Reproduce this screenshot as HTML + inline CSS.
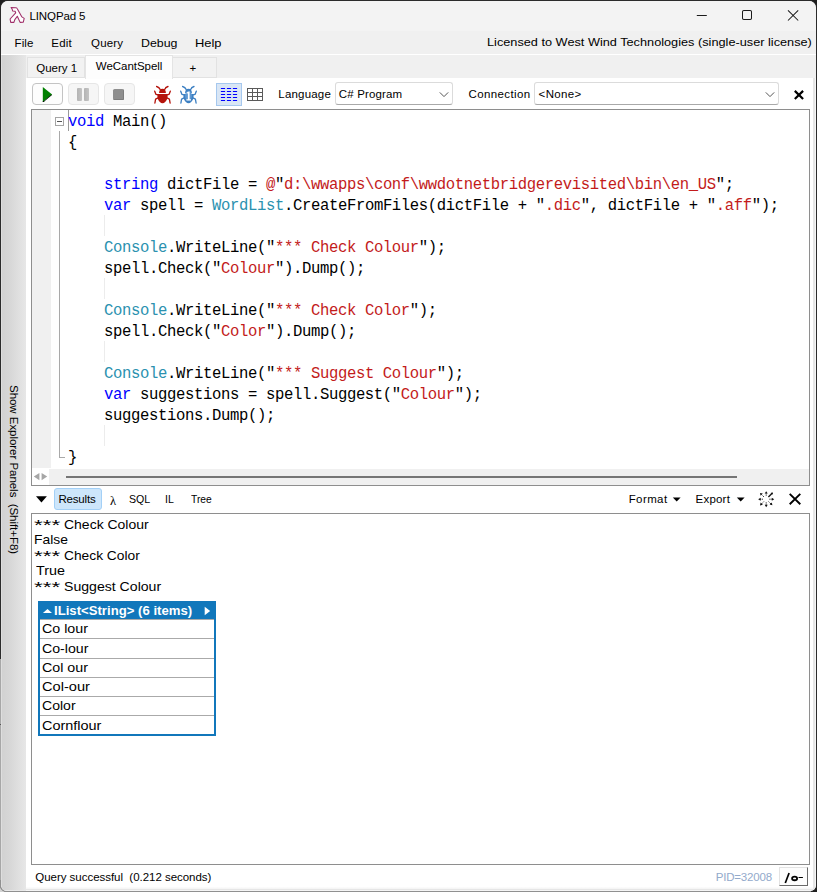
<!DOCTYPE html>
<html>
<head>
<meta charset="utf-8">
<title>LINQPad 5</title>
<style>
html,body{margin:0;padding:0;}
body{width:817px;height:892px;overflow:hidden;background:#1f1f1f;font-family:"Liberation Sans",sans-serif;font-size:12px;color:#000;position:relative;}
.a{position:absolute;}
#win{position:absolute;left:0;top:0;width:817px;height:892px;border-radius:8px 8px 7px 7px;background:#2b2b2b;overflow:hidden;}
#inner{position:absolute;left:1px;top:1px;width:815px;height:890px;border-radius:7px 7px 6px 6px;background:#fff;overflow:hidden;}
#c{position:absolute;left:-1px;top:-1px;width:817px;height:892px;}
.t{position:absolute;white-space:pre;line-height:16px;height:16px;color:#000;}
#title{left:0;top:0;width:817px;height:31px;background:#f3f3f3;}
#menu{left:0;top:31px;width:817px;height:23px;background:#f0f0f0;}
#side{left:1px;top:55px;width:25px;height:836px;background:linear-gradient(to right,#e4e4e4 0px,#d2d2d2 1.5px,#d6d6d6 8px,#e0e0e0 18px,#e7e7e7 25px);}
#tabs{left:26px;top:55px;width:791px;height:23px;background:#f0f0f0;}
.tab{position:absolute;box-sizing:border-box;border:1px solid #e2e2e2;background:#f2f2f2;}
.btn{position:absolute;box-sizing:border-box;border:1px solid #e6e6e6;border-radius:4px;background:#f6f6f6;}
.combo{position:absolute;box-sizing:border-box;border:1px solid #dbdbdb;border-bottom-color:#a9a9a9;border-radius:3px;background:#fff;}
#editor{left:31px;top:109px;width:779px;height:377px;box-sizing:border-box;border:1px solid #8e8e8e;background:#fff;}
#gutter{left:32px;top:110px;width:19px;height:357.5px;background:#f0f0f0;}
#code{left:68px;top:112px;font-family:"Liberation Mono",monospace;font-size:15.6px;letter-spacing:-0.362px;line-height:21px;white-space:pre;color:#000;}
#code .k{color:#0000ff;}
#code .s{color:#c31b1b;}
#code .c{color:#2b91af;}
#hscroll{left:32px;top:469px;width:777px;height:16px;background:#f0f0f0;}
#results{left:31px;top:513px;width:779px;height:352px;box-sizing:border-box;border:1px solid #8e8e8e;background:#fff;}
</style>
</head>
<body>
<div class="a" style="left:0;top:659px;width:24px;height:233px;background:#d3d3d3;"></div>
<div id="win"><div class="a" style="left:0;top:659px;width:30px;height:233px;background:#a7a7a7;"></div><div class="a" style="left:0;top:724px;width:1px;height:1px;background:#555;"></div><div class="a" style="left:0;top:880px;width:811px;height:12px;background:#909090;"></div><div id="inner"><div id="c">
  <div id="title" class="a"></div>
  <svg class="a" style="left:8px;top:5px" width="20" height="20" viewBox="0 0 20 20"><path d="M3.1 2.5 L8 2.7 Q9 2.9 9.4 3.9 L13.9 11.9 L16.2 13.4 L15.3 17.2 L12.1 17.4 L9.3 11.2 L6.8 14.6 L5.9 17.4 L2.7 17.4 L2.1 14 L7.7 7.8 L7.1 6.3 L4.75 6.05 L4.2 4.3 Z" fill="#fff" stroke="#a0306a" stroke-width="1.08" stroke-linejoin="round"/></svg>
  <svg class="a" style="left:690px;top:4px" width="120" height="24" viewBox="0 0 120 24"><g stroke="#1b1b1b" stroke-width="1.05" fill="none"><path d="M6.8 11.5 H16.8"/><rect x="52.5" y="6.5" width="9" height="9" rx="1.3"/><path d="M98 6.3 L108.2 16.5 M108.2 6.3 L98 16.5"/></g></svg>
  <div id="menu" class="a"></div>
  <div class="a" style="left:0;top:54px;width:817px;height:1px;background:#ffffff"></div>

  <div id="side" class="a"></div>
  <div class="t" id="sidetxt" style="left:19.8px;top:385px;transform-origin:0 0;transform:rotate(90deg);font-size:11.5px;line-height:12px;height:12px;letter-spacing:-0.04px;">Show Explorer Panels  (Shift+F8)</div>

  <div id="tabs" class="a"></div>
  <div class="tab" style="left:27px;top:57px;width:58px;height:21px;"></div>
  <div class="tab" style="left:172px;top:57px;width:45px;height:21px;"></div>
  <div class="tab" style="left:85px;top:55px;width:88px;height:24px;background:#fdfdfd;border-bottom:none;border-color:#e4e4e4;"></div>

  <!-- toolbar buttons -->
  <div class="btn" style="left:32px;top:83px;width:31px;height:22px;background:#fdfdfd;border-color:#c4c4c4;"></div>
  <svg class="a" style="left:38px;top:84px" width="20" height="20" viewBox="0 0 20 20"><path d="M4.8 2.9 L14.1 10.4 L4.8 18 Z" fill="#008000"/><path d="M5 17.7 L5.6 18.1 L14 10.9 L13.4 10.5 Z" fill="#001800"/><path d="M4.8 17.1 H6.2 V18 H4.8 Z" fill="#001800"/></svg>
  <div class="btn" style="left:68px;top:83px;width:31px;height:22px;"></div>
  <div class="a" style="left:76.8px;top:88.3px;width:5px;height:12.4px;background:linear-gradient(to right,#b4b4b4,#c4c4c4);border-radius:1px"></div>
  <div class="a" style="left:83.8px;top:88.3px;width:5px;height:12.4px;background:linear-gradient(to right,#b4b4b4,#c4c4c4);border-radius:1px"></div>
  <div class="btn" style="left:104px;top:83px;width:31px;height:22px;"></div>
  <div class="a" style="left:113.2px;top:88.8px;width:10.7px;height:10.8px;background:#8e8e8e;border-right:1px solid #7c7c7c;border-bottom:1px solid #7c7c7c;box-sizing:border-box;border-radius:1.5px"></div>

  <!-- bugs -->
  <svg class="a" style="left:152px;top:83px" width="22" height="22" viewBox="0 0 22 22">
    <g stroke="#b5140c" stroke-width="1.35" fill="none" stroke-linecap="round" stroke-linejoin="round">
      <path d="M4.6 3.5 Q7.2 4.2 8.2 6.6"/><path d="M16 3.5 Q13.4 4.2 12.6 6.6"/>
      <path d="M6.4 11.9 L3.9 11.3 L2.7 8.2"/><path d="M14.6 11.9 L17.1 11.3 L18.3 8.2"/>
      <path d="M6.6 14.6 L3.6 16.2 L2.9 20"/><path d="M14.4 14.6 L17.4 16.2 L18.1 20"/>
    </g>
    <path d="M5.5 10.9 H15.5 Q16.2 15.6 13.6 18.4 Q11.8 20.2 10.5 20.3 Q9.2 20.2 7.4 18.4 Q4.8 15.6 5.5 10.9 Z" fill="#b5140c"/>
    <path d="M7.1 10.1 A3.4 4.4 0 0 1 13.9 10.1 Z" fill="#b5140c"/>
    
  </svg>
  <svg class="a" style="left:177.8px;top:83px" width="22" height="22" viewBox="0 0 22 22">
    <g stroke="#3d80c3" stroke-width="1.35" fill="none" stroke-linecap="round" stroke-linejoin="round">
      <path d="M4.6 3.5 Q7.2 4.2 8.2 6.6"/><path d="M16 3.5 Q13.4 4.2 12.6 6.6"/>
      <path d="M6.4 11.9 L3.9 11.3 L2.7 8.2"/><path d="M14.6 11.9 L17.1 11.3 L18.3 8.2"/>
      <path d="M6.6 14.6 L3.6 16.2 L2.9 20"/><path d="M14.4 14.6 L17.4 16.2 L18.1 20"/>
    </g>
    <path d="M5.5 10.9 H15.5 Q16.2 15.6 13.6 18.4 Q11.8 20.2 10.5 20.3 Q9.2 20.2 7.4 18.4 Q4.8 15.6 5.5 10.9 Z" fill="#3d80c3"/>
    <path d="M7.1 10.1 A3.4 4.4 0 0 1 13.9 10.1 Z" fill="#3d80c3"/>
    <ellipse cx="10.5" cy="12.8" rx="3.4" ry="5" fill="#5f99d3"/><path d="M8.7 9.6 L10.9 8.4 H11.6 V16.3 H13 V17.5 H8.4 V16.3 H9.9 V10.2 L8.7 10.8 Z" fill="#fff"/>
  </svg>
  <!-- text / grid mode -->
  <div class="a" style="left:216px;top:83px;width:26px;height:23px;box-sizing:border-box;border:1px solid #a6c8ee;background:#d9e6f5;"></div>
  <svg class="a" style="left:216px;top:83px" width="50" height="24" viewBox="0 0 50 24">
    <g stroke="#0000ff" stroke-width="1" stroke-dasharray="4.2 1.8" fill="none">
      <path d="M4.9 5.5 H21.2"/><path d="M4.9 8.5 H21.2"/><path d="M4.9 11.5 H21.2"/><path d="M4.9 14.5 H21.2"/><path d="M4.9 17.5 H21.2"/>
    </g>
    <g stroke="#5a5a5a" stroke-width="1" fill="none">
      <rect x="31.5" y="5.5" width="15" height="12" fill="#fff"/>
      <path d="M36.5 5.5 V17.5 M41.5 5.5 V17.5 M31.5 9.5 H46.5 M31.5 13.5 H46.5"/>
    </g>
  </svg>

  <div class="combo" style="left:335px;top:82px;width:118px;height:23px;"></div>
  <svg class="a" style="left:438px;top:90px" width="12" height="9" viewBox="0 0 12 9"><path d="M1.8 2.4 L6 6.6 L10.2 2.4" stroke="#555" stroke-width="1" fill="none"/></svg>
  <div class="combo" style="left:534px;top:82px;width:245px;height:23px;"></div>
  <svg class="a" style="left:764px;top:90px" width="12" height="9" viewBox="0 0 12 9"><path d="M1.8 2.4 L6 6.6 L10.2 2.4" stroke="#555" stroke-width="1" fill="none"/></svg>
  <svg class="a" style="left:791px;top:87px" width="16" height="16" viewBox="0 0 16 16"><path d="M3.8 3.9 L12.1 12 M12.1 3.9 L3.8 12" stroke="#000" stroke-width="2.2" fill="none"/></svg>

  <!-- editor -->
  <div id="editor" class="a"></div>
  <div id="gutter" class="a"></div>
  <div class="a" style="left:55px;top:117px;width:9px;height:9px;box-sizing:border-box;border:1px solid #a5a5a5;background:#fff;"></div>
  <div class="a" style="left:57px;top:121px;width:5px;height:1px;background:#555;"></div>
  <div class="a" style="left:59px;top:131px;width:1px;height:327px;background:#a9a9a9;"></div>
  <div class="a" style="left:59px;top:457px;width:6px;height:1px;background:#a9a9a9;"></div>
  <div class="a" style="left:68px;top:110px;width:1px;height:21px;background:#9a9a9a;"></div>
  <div class="a" style="left:104px;top:215px;width:1px;height:21px;background:#ececec;"></div>
  <div class="a" style="left:104px;top:278px;width:1px;height:21px;background:#ececec;"></div>
  <div class="a" style="left:104px;top:341px;width:1px;height:21px;background:#ececec;"></div>
  <div class="a" style="left:104px;top:425px;width:1px;height:21px;background:#ececec;"></div>
  <div id="code" class="a"><span class="k">void</span> Main()
{

    <span class="k">string</span> dictFile = <span class="s">@</span>"<span class="s">d:\wwapps\conf\wwdotnetbridgerevisited\bin\en_US</span>";
    <span class="k">var</span> spell = <span class="c">WordList</span>.CreateFromFiles(dictFile + "<span class="s">.dic</span>", dictFile + "<span class="s">.aff</span>");

    <span class="c">Console</span>.WriteLine("<span class="s">*** Check Colour</span>");
    spell.Check("<span class="s">Colour</span>").Dump();

    <span class="c">Console</span>.WriteLine("<span class="s">*** Check Color</span>");
    spell.Check("<span class="s">Color</span>").Dump();

    <span class="c">Console</span>.WriteLine("<span class="s">*** Suggest Colour</span>");
    <span class="k">var</span> suggestions = spell.Suggest("<span class="s">Colour</span>");
    suggestions.Dump();

}</div>
  <div id="hscroll" class="a"></div>
  <div class="a" style="left:32px;top:469px;width:17px;height:16px;background:#fff;"></div>
  <svg class="a" style="left:32px;top:470px" width="18" height="14" viewBox="0 0 18 14"><path d="M7.4 3 V10.2 L1.8 6.6 Z M9.6 3 V10.2 L15.2 6.6 Z" fill="#a6a6a6"/></svg>
  <div class="a" style="left:66px;top:475.6px;width:671px;height:2.2px;background:#757575;"></div>

  <!-- results toolbar -->
  <svg class="a" style="left:35px;top:495px" width="13" height="9" viewBox="0 0 13 9"><path d="M1 1.3 H11.9 L6.45 7.6 Z" fill="#000"/></svg>
  <div class="a" style="left:54px;top:488px;width:48px;height:22px;box-sizing:border-box;border:1px solid #a3d0f7;border-radius:3px;background:#cde6fb;"></div>
  <svg class="a" style="left:672px;top:496px" width="10" height="7" viewBox="0 0 10 7"><path d="M0.8 1.4 H8.6 L4.7 5.6 Z" fill="#000"/></svg>
  <svg class="a" style="left:735.5px;top:496px" width="10" height="7" viewBox="0 0 10 7"><path d="M0.8 1.4 H8.6 L4.7 5.6 Z" fill="#000"/></svg>
  <svg class="a" style="left:757px;top:490px" width="19" height="19" viewBox="0 0 19 19">
    <g stroke="#111" stroke-width="1" fill="none" stroke-dasharray="1.1 0.9">
      <path d="M9.2 3.4 V6"/><path d="M9.2 12.4 V15"/><path d="M3.2 9.2 H6"/><path d="M12.4 9.2 H15"/>
      <path d="M4.6 4.6 L6.8 6.8"/><path d="M4.6 13.8 L6.8 11.6"/><path d="M13.8 13.8 L11.6 11.6"/>
    </g>
    <path d="M11.4 7 L15.4 3" stroke="#111" stroke-width="1.3" fill="none"/>
    <g fill="#111"><path d="M9.2 1.2 L10.7 3.6 H7.7 Z"/><path d="M9.2 17.2 L10.7 14.8 H7.7 Z"/><path d="M1.2 9.2 L3.6 7.7 V10.7 Z"/><path d="M17.2 9.2 L14.8 7.7 V10.7 Z"/>
    <path d="M3 3 L5.8 3.6 L3.6 5.8 Z"/><path d="M3 15.4 L5.8 14.8 L3.6 12.6 Z"/><path d="M15.4 15.2 L12.6 14.6 L14.8 12.4 Z"/><path d="M16 2.4 L13.6 3 L15.4 4.8 Z"/></g>
  </svg>
  <svg class="a" style="left:786px;top:491px" width="18" height="18" viewBox="0 0 18 18"><path d="M3.7 2.9 L14.3 13.2 M14.3 2.9 L3.7 13.2" stroke="#000" stroke-width="1.9" fill="none"/></svg>

  <!-- results pane -->
  <div id="results" class="a"></div>
  <div class="a" style="left:38px;top:601px;width:178px;height:135px;box-sizing:border-box;border:2px solid #1177bb;background:#fff;"></div>
  <div class="a" style="left:38px;top:601px;width:178px;height:18.4px;background:#1177bb;"></div>
  <div class="a" style="left:40px;top:638.4px;width:174px;height:1px;background:#aaa;"></div>
  <div class="a" style="left:40px;top:657.6px;width:174px;height:1px;background:#aaa;"></div>
  <div class="a" style="left:40px;top:676.8px;width:174px;height:1px;background:#aaa;"></div>
  <div class="a" style="left:40px;top:696px;width:174px;height:1px;background:#aaa;"></div>
  <div class="a" style="left:40px;top:715.2px;width:174px;height:1px;background:#aaa;"></div>
  <div class="a" style="left:40px;top:619.2px;width:174px;height:1px;background:#aaa;"></div>
  <svg class="a" style="left:42px;top:606px" width="12" height="10" viewBox="0 0 12 10"><path d="M0.9 7 L5.5 2.9 L10 7 Z" fill="#fff"/></svg>
  <svg class="a" style="left:203px;top:605px" width="10" height="12" viewBox="0 0 10 12"><path d="M1.7 1.8 L7.2 6 L1.7 10.3 Z" fill="#fff"/></svg>

  <!-- status -->
  <div class="a" style="left:779px;top:867px;width:29px;height:19px;box-sizing:border-box;border:1px solid #e3e3e3;border-right-color:#696969;border-bottom-color:#696969;background:#fdfdfd;"></div>
  <svg class="a" style="left:780px;top:868px" width="27" height="17" viewBox="0 0 27 17"><path d="M5.3 15 L9.1 5" stroke="#000" stroke-width="1.7" fill="none"/><ellipse cx="14.6" cy="10.45" rx="2.5" ry="1.8" stroke="#000" stroke-width="1.8" fill="none"/><path d="M18.5 9.5 H22.9" stroke="#000" stroke-width="1.1" fill="none"/></svg>
  <div class="a" style="left:26px;top:887px;width:791px;height:4px;background:linear-gradient(to bottom,#fdfdfd 0,#f6f6f6 1.5px,#e6e6e6 2.5px,#f5f5f5 3.5px,#f5f5f5 4px);"></div>
  <div class="a" style="left:1px;top:890px;width:25px;height:1px;background:#e9e9e9;"></div>
  <div class="a" style="left:813px;top:78px;width:3px;height:813px;background:linear-gradient(to right,#e6e6e6 0,#e6e6e6 1.6px,#f5f5f5 2.2px,#f5f5f5 3px);"></div>

<div class="t" style="top:8.02px;font-size:11.5px;left:29.50px;letter-spacing:-0.113px;">LINQPad 5</div>
<div class="t" style="top:35.02px;font-size:11.5px;left:14.60px;letter-spacing:0.100px;">File</div>
<div class="t" style="top:35.02px;font-size:11.5px;left:51.30px;letter-spacing:0.233px;">Edit</div>
<div class="t" style="top:35.02px;font-size:11.5px;left:91.00px;letter-spacing:0.200px;">Query</div>
<div class="t" style="top:35.02px;font-size:11.5px;left:141.43px;transform-origin:0 0;transform:scaleX(1.0750);">Debug</div>
<div class="t" style="top:35.02px;font-size:11.5px;left:195.08px;transform-origin:0 0;transform:scaleX(1.1227);">Help</div>
<div class="t" style="top:34.19px;font-size:11px;left:487.14px;transform-origin:0 0;transform:scaleX(1.1566);">Licensed to West Wind Technologies (single-user license)</div>
<div class="t" style="top:60.02px;font-size:11.5px;left:36.30px;letter-spacing:-0.017px;">Query 1</div>
<div class="t" style="top:58.02px;font-size:11.5px;left:95.80px;letter-spacing:-0.040px;">WeCantSpell</div>
<div class="t" style="top:60.02px;font-size:11.5px;left:189.50px;">+</div>
<div class="t" style="top:86.02px;font-size:11.5px;left:278.30px;letter-spacing:0.200px;">Language</div>
<div class="t" style="top:86.02px;font-size:11.5px;left:338.80px;letter-spacing:0.156px;">C# Program</div>
<div class="t" style="top:86.02px;font-size:11.5px;left:468.60px;letter-spacing:0.367px;">Connection</div>
<div class="t" style="top:86.02px;font-size:11.5px;left:538.60px;letter-spacing:0.360px;">&lt;None&gt;</div>
<div class="t" style="top:491.12px;font-size:11.5px;left:58.50px;letter-spacing:-0.200px;">Results</div>
<div class="t" style="top:492.98px;font-size:12.5px;font-family:'Liberation Serif',serif;left:110.00px;">λ</div>
<div class="t" style="top:491.12px;font-size:11.5px;left:129.18px;transform-origin:0 0;transform:scaleX(0.9227);">SQL</div>
<div class="t" style="top:491.12px;font-size:11.5px;left:164.79px;transform-origin:0 0;transform:scaleX(0.9125);">IL</div>
<div class="t" style="top:491.12px;font-size:11.5px;left:191.40px;transform-origin:0 0;transform:scaleX(0.8913);">Tree</div>
<div class="t" style="top:491.12px;font-size:11.5px;left:628.70px;letter-spacing:0.400px;">Format</div>
<div class="t" style="top:491.12px;font-size:11.5px;left:695.60px;letter-spacing:0.200px;">Export</div>
<div class="t" style="top:869.02px;font-size:11.5px;left:35.30px;letter-spacing:-0.031px;">Query successful  (0.212 seconds)</div>
<div class="t" style="top:869.02px;font-size:11.5px;left:715.70px;letter-spacing:-0.175px;color:#93aacb;">PID=32008</div>
<div class="t" style="top:517.04px;font-size:14.6px;left:34.36px;transform-origin:0 0;transform:scaleX(1.5400);">***</div>
<div class="t" style="top:516.66px;font-size:12.8px;left:63.61px;transform-origin:0 0;transform:scaleX(1.0922);">Check Colour</div>
<div class="t" style="top:532.16px;font-size:12.8px;left:34.22px;transform-origin:0 0;transform:scaleX(1.0833);">False</div>
<div class="t" style="top:548.04px;font-size:14.6px;left:34.36px;transform-origin:0 0;transform:scaleX(1.5400);">***</div>
<div class="t" style="top:547.66px;font-size:12.8px;left:63.62px;transform-origin:0 0;transform:scaleX(1.0757);">Check Color</div>
<div class="t" style="top:563.16px;font-size:12.8px;left:36.20px;transform-origin:0 0;transform:scaleX(1.1200);">True</div>
<div class="t" style="top:579.04px;font-size:14.6px;left:34.36px;transform-origin:0 0;transform:scaleX(1.5400);">***</div>
<div class="t" style="top:578.66px;font-size:12.8px;left:63.60px;transform-origin:0 0;transform:scaleX(1.1011);">Suggest Colour</div>
<div class="t" style="top:621.26px;font-size:12.8px;left:41.78px;transform-origin:0 0;transform:scaleX(1.1150);">Co lour</div>
<div class="t" style="top:640.51px;font-size:12.8px;left:41.79px;transform-origin:0 0;transform:scaleX(1.1073);">Co-lour</div>
<div class="t" style="top:659.76px;font-size:12.8px;left:41.78px;transform-origin:0 0;transform:scaleX(1.1150);">Col our</div>
<div class="t" style="top:679.01px;font-size:12.8px;left:41.76px;transform-origin:0 0;transform:scaleX(1.1415);">Col-our</div>
<div class="t" style="top:698.26px;font-size:12.8px;left:41.80px;transform-origin:0 0;transform:scaleX(1.1000);">Color</div>
<div class="t" style="top:717.51px;font-size:12.8px;left:41.77px;transform-origin:0 0;transform:scaleX(1.1288);">Cornflour</div>
<div class="t" style="top:602.56px;font-size:12.8px;font-weight:bold;left:54.47px;transform-origin:0 0;transform:scaleX(1.0278);color:#fff;">IList&lt;String&gt; (6 items)</div>
</div></div></div>
</body>
</html>
